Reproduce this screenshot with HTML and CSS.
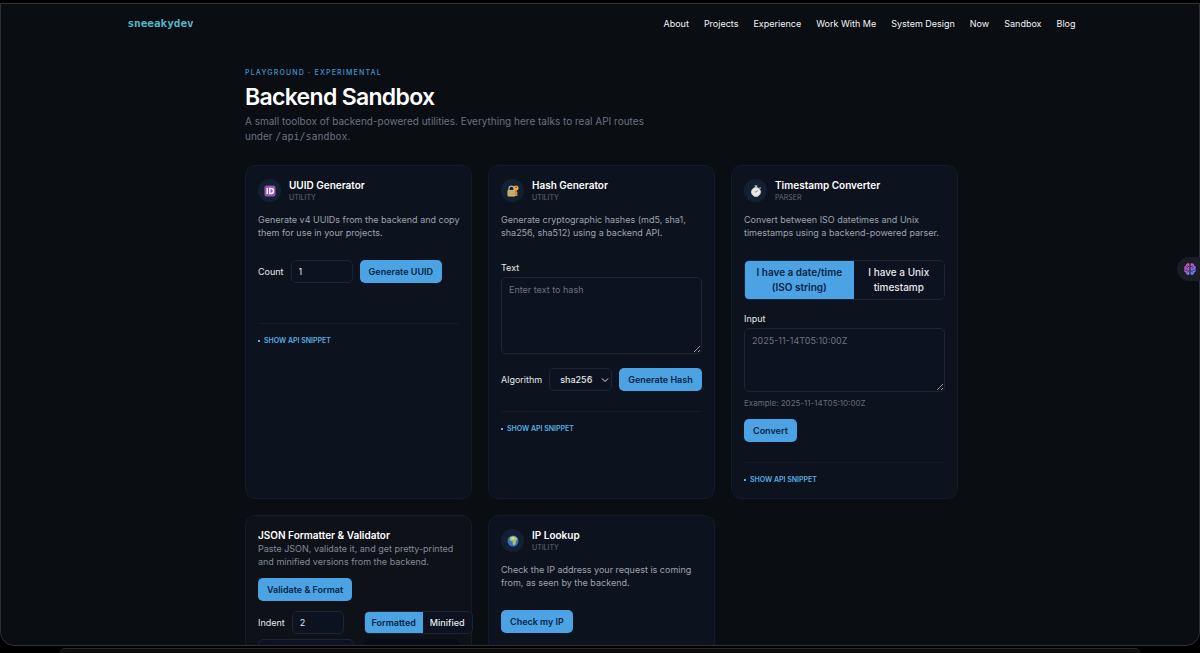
FILE: index.html
```
<!DOCTYPE html>
<html lang="en">
<head>
    <meta charset="UTF-8">
    <meta name="viewport" content="width=device-width, initial-scale=1.0">
    <title>Backend Sandbox</title>
    <link rel="stylesheet" href="styles.css">
</head>
<body>
    <div class="window">
        <header class="navbar">
            <a class="logo" href="#">sneeakydev</a>
            <nav class="nav-links">
                <a href="#about">About</a>
                <a href="#projects">Projects</a>
                <a href="#experience">Experience</a>
                <a href="#work">Work With Me</a>
                <a href="#system-design">System Design</a>
                <a href="#now">Now</a>
                <a href="#sandbox">Sandbox</a>
                <a href="#blog">Blog</a>
            </nav>
        </header>

        <main class="container">
            <div class="intro">
                <p class="eyebrow">Playground · Experimental</p>
                <h1>Backend Sandbox</h1>
                <p class="lead">A small toolbox of backend-powered utilities. Everything here talks to real API routes under <code>/api/sandbox</code>.</p>
            </div>

            <div class="grid">
                <section class="card">
                    <div class="card-header">
                        <span class="card-icon">
                            <svg viewBox="0 0 24 24" width="12" height="12">
                                <rect x="1" y="1" width="22" height="22" rx="4" fill="#9a4fc4"/>
                                <path d="M6.500 6v12M11.500 7v10h2.500a5 5 0 0 0 0-10z" fill="none" stroke="#fff" stroke-width="3"/>
                            </svg>
                        </span>
                        <div>
                            <h2>UUID Generator</h2>
                            <p class="tag">Utility</p>
                        </div>
                    </div>
                    <p class="desc">Generate v4 UUIDs from the backend and copy them for use in your projects.</p>
                    <div class="row">
                        <label for="count">Count</label>
                        <input id="count" class="count" type="text" inputmode="numeric" value="1">
                        <button class="btn" type="button">Generate UUID</button>
                    </div>
                    <div class="result"></div>
                    <div class="snippet"><button type="button"><span class="dot"></span>Show API snippet</button></div>
                </section>

                <section class="card">
                    <div class="card-header">
                        <span class="card-icon">
                            <svg viewBox="0 0 24 24" width="12" height="12">
                                <path d="M4 11V7a5 5 0 0 1 10 0v4" fill="none" stroke="#a9b4bd" stroke-width="2.500"/>
                                <rect x="1" y="10" width="16" height="13" rx="2" fill="#c8b878"/>
                                <path d="M1 14h16M1 18h16" stroke="#a8935a" stroke-width="1"/>
                                <circle cx="18" cy="6" r="5" fill="#f0ab3c"/>
                                <circle cx="18" cy="4.500" r="1.500" fill="#5b3d1c"/>
                                <path d="M18 10v12M18 16h3M18 20h3" stroke="#e8962e" stroke-width="3"/>
                            </svg>
                        </span>
                        <div>
                            <h2>Hash Generator</h2>
                            <p class="tag">Utility</p>
                        </div>
                    </div>
                    <p class="desc">Generate cryptographic hashes (md5, sha1, sha256, sha512) using a backend API.</p>
                    <div class="field">
                        <label for="hash-text">Text</label>
                        <textarea id="hash-text" class="hash-text" placeholder="Enter text to hash"></textarea>
                    </div>
                    <div class="row">
                        <label for="algorithm">Algorithm</label>
                        <div class="select">
                            <select id="algorithm">
                                <option>md5</option>
                                <option>sha1</option>
                                <option selected>sha256</option>
                                <option>sha512</option>
                            </select>
                            <svg viewBox="0 0 8 8" width="8" height="8"><path d="M1 2.500l3 3 3-3" fill="none" stroke="#e5e7eb" stroke-width="1"/></svg>
                        </div>
                        <button class="btn" type="button">Generate Hash</button>
                    </div>
                    <div class="snippet"><button type="button"><span class="dot"></span>Show API snippet</button></div>
                </section>

                <section class="card">
                    <div class="card-header">
                        <span class="card-icon">
                            <svg viewBox="0 0 24 24" width="12" height="12">
                                <path d="M9.500 2h5M12 2v4M19 5l2 2" stroke="#b8bcc2" stroke-width="3"/>
                                <circle cx="12" cy="14" r="9" fill="#eceae6" stroke="#bfc2c7" stroke-width="2"/>
                                <path d="M12 14l4-3M12 14H9" stroke="#69625d" stroke-width="1.500"/>
                            </svg>
                        </span>
                        <div>
                            <h2>Timestamp Converter</h2>
                            <p class="tag">Parser</p>
                        </div>
                    </div>
                    <p class="desc">Convert between ISO datetimes and Unix timestamps using a backend-powered parser.</p>
                    <div class="toggle toggle-large">
                        <button class="active" type="button">I have a date/time (ISO string)</button>
                        <button type="button">I have a Unix timestamp</button>
                    </div>
                    <div class="field">
                        <label for="stamp">Input</label>
                        <textarea id="stamp" class="stamp" placeholder="2025-11-14T05:10:00Z"></textarea>
                        <p class="hint">Example: 2025-11-14T05:10:00Z</p>
                    </div>
                    <button class="btn convert" type="button">Convert</button>
                    <div class="snippet"><button type="button"><span class="dot"></span>Show API snippet</button></div>
                </section>

                <section class="card card-plain">
                    <h2>JSON Formatter &amp; Validator</h2>
                    <p class="desc">Paste JSON, validate it, and get pretty-printed and minified versions from the backend.</p>
                    <button class="btn" type="button">Validate &amp; Format</button>
                    <div class="columns">
                        <div class="row">
                            <label for="indent">Indent</label>
                            <input id="indent" class="indent" type="text" inputmode="numeric" value="2">
                        </div>
                        <div class="toggle">
                            <button class="active" type="button">Formatted</button>
                            <button type="button">Minified</button>
                        </div>
                        <textarea class="json-input" aria-label="JSON input"></textarea>
                        <pre class="json-output"></pre>
                    </div>
                </section>

                <section class="card">
                    <div class="card-header">
                        <span class="card-icon">
                            <svg viewBox="0 0 24 24" width="12" height="12">
                                <circle cx="12" cy="12" r="11" fill="#3d6fc0"/>
                                <path d="M7 4l6-2 6 3 2 4-3 3-1 6-4 3-2-4 1-4-4-1-3-3z" fill="#a9c46a"/>
                                <path d="M8 5l5-1 3 3-4 2-3-1z" fill="#e2d9a0"/>
                            </svg>
                        </span>
                        <div>
                            <h2>IP Lookup</h2>
                            <p class="tag">Utility</p>
                        </div>
                    </div>
                    <p class="desc">Check the IP address your request is coming from, as seen by the backend.</p>
                    <button class="btn" type="button">Check my IP</button>
                </section>
            </div>
        </main>
    </div>
    <div class="dock"></div>

    <button class="side-tab" type="button" aria-label="Open assistant">
        <svg viewBox="0 0 24 24" width="14" height="14">
            <defs>
                <linearGradient id="brain" x1="0" y1="0" x2="1" y2="1">
                    <stop offset="0" stop-color="#e0489a"/>
                    <stop offset="0.500" stop-color="#a06be8"/>
                    <stop offset="1" stop-color="#4f8cf5"/>
                </linearGradient>
            </defs>
            <path d="M11 3c-3-2-6 0-6 3-3 1-4 4-2 6-2 3 0 6 2 6 0 4 4 5 6 3zM13 3c3-2 6 0 6 3 3 1 4 4 2 6 2 3 0 6-2 6 0 4-4 5-6 3z" fill="url(#brain)"/>
            <path d="M5 9c2-1 3 0 3 2M4 14h4M8 18c0-2 1-3 3-3M8 6c0 1 1 2 3 2M19 9c-2-1-3 0-3 2M20 14h-4M16 18c0-2-1-3-3-3M16 6c0 1-1 2-3 2" fill="none" stroke="#1d1b2c" stroke-width="1.400"/>
        </svg>
    </button>
</body>
</html>
```
FILE: styles.css
```
* {
    box-sizing: border-box;
}
body {
    display: flex;
    flex-direction: column;
    gap: 2px;
    height: 100vh;
    margin: 0;
    padding-top: 3px;
    overflow: hidden;
    background: #000;
    color: #e5e7eb;
    font-family: Inter, sans-serif;
    font-size: 9px;
    line-height: 13px;
}
h1, h2, p, pre {
    margin: 0;
}
a {
    color: inherit;
    text-decoration: none;
}
button, input, select, textarea {
    margin: 0;
    font: inherit;
    color: inherit;
}
button {
    cursor: pointer;
}

/* Window frame */
.window {
    flex: 1;
    min-height: 0;
    overflow: hidden;
    padding-left: 3px;
    background: #0a0d12;
    border: 1px solid #303134;
    border-radius: 0 0 14px 14px;
}
.dock {
    flex: none;
    height: 5px;
    margin: 0 60px;
    background: #0e0e0f;
    border-top: 1px solid #29292b;
    border-radius: 10px 10px 0 0;
}

/* Navbar */
.navbar {
    display: flex;
    justify-content: space-between;
    align-items: center;
    max-width: 948px;
    height: 38px;
    margin: 0 auto;
}
.logo {
    color: #56b6c9;
    font-family: "DejaVu Sans Mono", monospace;
    font-size: 11px;
    font-weight: bold;
}
.nav-links {
    display: flex;
    gap: 15px;
    color: #f3f4f6;
}

/* Intro */
.container {
    max-width: 713px;
    margin: 0 auto;
    padding-top: 24px;
}
.intro {
    max-width: 420px;
    margin-bottom: 21px;
}
.eyebrow {
    color: #4396d3;
    font-size: 7px;
    font-weight: 500;
    letter-spacing: 0.17em;
    text-transform: uppercase;
}
h1 {
    margin-top: 2px;
    margin-bottom: 1px;
    color: #fff;
    font-size: 23px;
    font-weight: 600;
    line-height: 32px;
    letter-spacing: -0.03em;
}
.lead {
    color: #6b7280;
    font-size: 10px;
    line-height: 15px;
}
.lead code {
    font-family: "DejaVu Sans Mono", monospace;
}

/* Cards */
.grid {
    display: grid;
    grid-template-columns: repeat(3, 1fr);
    gap: 16px;
}
.card {
    min-width: 0;
    padding: 12px;
    background: #0d131e;
    border: 1px solid #131b28;
    border-radius: 10px;
}
.card-plain {
    background: #0e1118;
    border-color: #171b24;
}
.card-header {
    display: flex;
    align-items: center;
    gap: 8px;
    margin-bottom: 10px;
}
.card-icon {
    display: flex;
    align-items: center;
    justify-content: center;
    width: 23px;
    height: 23px;
    background: #122032;
    border-radius: 50%;
}
h2 {
    color: #fff;
    font-size: 10px;
    font-weight: 600;
    line-height: 14px;
}
.tag {
    color: #626a78;
    font-size: 7px;
    line-height: 11px;
    text-transform: uppercase;
}
.desc {
    margin-right: -4px;
    margin-bottom: 21px;
    color: #9ca3af;
}
.card-plain .desc {
    margin-bottom: 10px;
    color: #838a98;
}

/* Controls */
.row {
    display: flex;
    align-items: center;
    gap: 7px;
}
.btn {
    height: 23px;
    padding: 0 9px;
    background: #4ba3e3;
    border: none;
    border-radius: 5px;
    color: #082444;
    font-weight: 600;
    white-space: nowrap;
}
input, textarea, select {
    background: #0d1220;
    border: 1px solid #1d2433;
    border-radius: 5px;
    outline: none;
}
input {
    height: 23px;
    padding: 0 7px;
}
.count {
    width: 62px;
}
.indent {
    width: 52px;
}
.field {
    margin-bottom: 14px;
}
.field label {
    display: block;
    line-height: 15px;
    margin-bottom: 2px;
}
textarea {
    display: block;
    width: 100%;
    padding: 5px 7px;
    resize: vertical;
}
textarea::placeholder {
    color: #6b7280;
}
.hash-text {
    height: 77px;
}
.stamp {
    height: 64px;
}
.hint {
    margin-top: 5px;
    color: #626a78;
    font-size: 8px;
}
.toggle + .field {
    margin-bottom: 9px;
}
.select {
    position: relative;
}
.select select {
    width: 63px;
    height: 23px;
    padding: 0 10px;
    appearance: none;
    font-weight: 500;
}
.select svg {
    position: absolute;
    top: 8px;
    right: 3px;
    pointer-events: none;
}
.toggle {
    display: flex;
    width: max-content;
    height: 23px;
    overflow: hidden;
    border: 1px solid #1d2433;
    border-radius: 5px;
}
.toggle button {
    padding: 0 7px;
    background: #0d1220;
    border: none;
    font-weight: 500;
}
.toggle .active {
    background: #4ba3e3;
    color: #082444;
    font-weight: 600;
}
.toggle-large {
    width: auto;
    height: auto;
    margin-bottom: 11px;
}
.toggle-large button {
    flex: 1 1 auto;
    padding: 4px 10px;
    font-size: 10px;
    line-height: 15px;
}
.result {
    height: 20px;
}

/* API snippet */
.snippet {
    margin-top: 20px;
    padding-top: 10px;
    border-top: 1px solid #141c29;
}
.snippet button {
    display: flex;
    align-items: center;
    gap: 4px;
    padding: 0;
    background: none;
    border: none;
    color: #56aee4;
    font-size: 7px;
    font-weight: 600;
    text-transform: uppercase;
}
.dot {
    width: 2px;
    height: 2px;
    background: #56aee4;
}

/* JSON card */
.columns {
    display: grid;
    grid-template-columns: minmax(0, 1fr) minmax(0, 1fr);
    gap: 5px 10px;
    margin-top: 10px;
}
.json-input, .json-output {
    height: 80px;
}
.json-output {
    background: #090b14;
    border-radius: 5px;
}

/* Floating tab */
.side-tab {
    position: absolute;
    top: 257px;
    right: 0;
    display: flex;
    align-items: center;
    width: 23px;
    height: 24px;
    padding: 0 0 0 6px;
    background: #1b1c28;
    border: none;
    border-radius: 12px 0 0 12px;
}
```
